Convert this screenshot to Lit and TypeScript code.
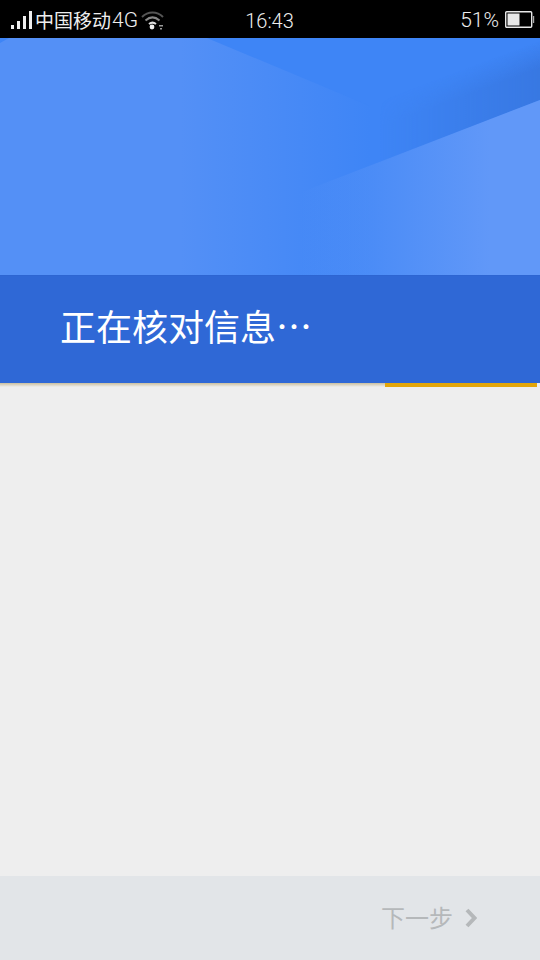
import { LitElement, html, css, svg } from "lit";
import { customElement } from "lit/decorators.js";

@customElement("app-root")
export class AppRoot extends LitElement {
  static styles = css`
    :host { display: flex; flex-direction: column; width: 540px; height: 960px; background: #eeeeee; overflow: hidden;
      font-family: Roboto, "Noto Sans CJK SC", sans-serif; }
    .status { height: 38px; flex: none; background: #000; color: #eeeeee; display: grid; grid-template-columns: 1fr auto 1fr; align-items: center; }
    .left { display: flex; align-items: center; padding-left: 11px; }
    .carrier { font-size: 19px; line-height: 36px; margin-left: 2px; font-family: "Noto Sans CJK SC", sans-serif; }
    .net { font-size: 21px; line-height: 36px; margin-left: 1px; font-weight: 300; font-family: Roboto, sans-serif; }
    .wifi { margin-left: 3px; }
    .time { font-size: 20px; line-height: 38px; padding-top: 2px; font-weight: 300; margin-left: -1px; }
    .right { display: flex; align-items: center; justify-content: flex-end; padding-right: 5px; gap: 6px; }
    .pct { font-size: 21px; font-weight: 300; line-height: 38px; }
    .hero { display: block; flex: none; width: 540px; height: 237px; }
    .banner { flex: none; height: 108px; box-sizing: border-box; background: #2f68d6; border-top: 1px solid #2d65d2; color: #fff;
      display: flex; align-items: center; padding: 0 0 9px 60px; font-family: "Noto Sans CJK SC", sans-serif; font-size: 36px; line-height: 1; }
    .progress { flex: none; height: 4px; display: flex; }
    .track { width: 385px; background: linear-gradient(#cbbf9e, #eeeeee); }
    .fill { width: 152px; background: #e3a60a; }
    .content { flex: 1; }
    .footer { flex: none; height: 84px; background: #e2e5e8; display: flex; align-items: center; justify-content: flex-end; padding: 0 63px 0 0; gap: 12px; color: #b5b8ba; font-size: 24px; }
    .next-label { line-height: 84px; padding-top: 2px; }
  `;

  private signal() {
    return html`<svg width="22" height="18" viewBox="0 0 22 18">
      <rect x="0" y="14" width="3" height="4" fill="#eee"/>
      <rect x="6" y="10" width="3" height="8" fill="#eee"/>
      <rect x="12" y="5" width="3" height="13" fill="#eee"/>
      <rect x="18" y="0" width="3" height="18" fill="#eee"/>
    </svg>`;
  }

  private wifi() {
    return html`<svg class="wifi" width="24" height="20" viewBox="0 0 24 20" fill="none">
      <path d="M1 7 C7 1 16 1 22 7" stroke="#555" stroke-width="2"/>
      <path d="M4.5 10.5 C9 6.5 14 6.5 18.5 10.5" stroke="#888" stroke-width="2"/>
      <path d="M8 14 C10.5 12 12.5 12 15 14" stroke="#ddd" stroke-width="2"/>
      <circle cx="11" cy="17" r="2.4" fill="#eee"/>
      <rect x="18" y="15" width="4" height="1.5" fill="#999"/>
      <rect x="19" y="18" width="2" height="1.5" fill="#999"/>
    </svg>`;
  }

  private battery() {
    return html`<svg width="30" height="18" viewBox="0 0 30 18">
      <rect x="0.7" y="0.7" width="26" height="15.6" rx="1" fill="none" stroke="#e8e8e8" stroke-width="1.4"/>
      <rect x="2.5" y="2.5" width="12" height="12" fill="#e8e8e8"/>
      <rect x="28" y="5" width="1.2" height="7" fill="#aaa"/>
    </svg>`;
  }

  private heroArt() {
    return svg`<svg class="hero" viewBox="0 0 540 237">
      <defs>
        <linearGradient id="mid" gradientUnits="userSpaceOnUse" x1="180" y1="0" x2="370" y2="0">
          <stop offset="0" stop-color="#3e85f6" stop-opacity="0"/><stop offset="1" stop-color="#3e85f6"/>
        </linearGradient>
        <linearGradient id="shade" gradientUnits="userSpaceOnUse" x1="451" y1="36" x2="460" y2="60">
          <stop offset="0" stop-color="#3878e2" stop-opacity="0"/><stop offset="1" stop-color="#3878e2"/>
        </linearGradient>
        <linearGradient id="shadeFade" gradientUnits="userSpaceOnUse" x1="380" y1="0" x2="540" y2="0">
          <stop offset="0" stop-color="#000"/><stop offset="1" stop-color="#fff"/>
        </linearGradient>
        <mask id="shadeMask" maskUnits="userSpaceOnUse" x="0" y="0" width="540" height="237">
          <rect width="540" height="237" fill="url(#shadeFade)"/>
        </mask>
        <linearGradient id="light" gradientUnits="userSpaceOnUse" x1="300" y1="0" x2="490" y2="0">
          <stop offset="0" stop-color="#6198f8" stop-opacity="0"/><stop offset="1" stop-color="#6198f8"/>
        </linearGradient>
      </defs>
      <rect width="540" height="237" fill="#5490f6"/>
      <rect width="540" height="237" fill="url(#mid)"/>
      <polygon points="207,0 540,0 540,62 370,128 370,68" fill="#3e85f6"/>
      <polygon points="380,0 540,0 540,62 380,124" fill="url(#shade)" mask="url(#shadeMask)"/>
      <polygon points="312,150 540,62 540,237 300,237 300,155" fill="url(#light)"/>
      <polygon points="0,0 9,0 0,5" fill="#3e85f6"/>
    </svg>`;
  }

  render() {
    return html`
      <div class="status" lang="zh-Hans">
        <div class="left">
          ${this.signal()}
          <span class="carrier">中国移动</span><span class="net">4G</span>
          ${this.wifi()}
        </div>
        <div class="time">16:43</div>
        <div class="right"><span class="pct">51%</span>${this.battery()}</div>
      </div>
      ${this.heroArt()}
      <div class="banner" lang="zh-Hans">正在核对信息…</div>
      <div class="progress"><div class="track"></div><div class="fill"></div></div>
      <div class="content"></div>
      <div class="footer" lang="zh-Hans">
        <span class="next-label">下一步</span>
        <svg width="12" height="20" viewBox="0 0 12 20" fill="none">
          <path d="M2 2 L9.5 10 L2 18" stroke="#b5b8ba" stroke-width="4"/>
        </svg>
      </div>
    `;
  }
}
